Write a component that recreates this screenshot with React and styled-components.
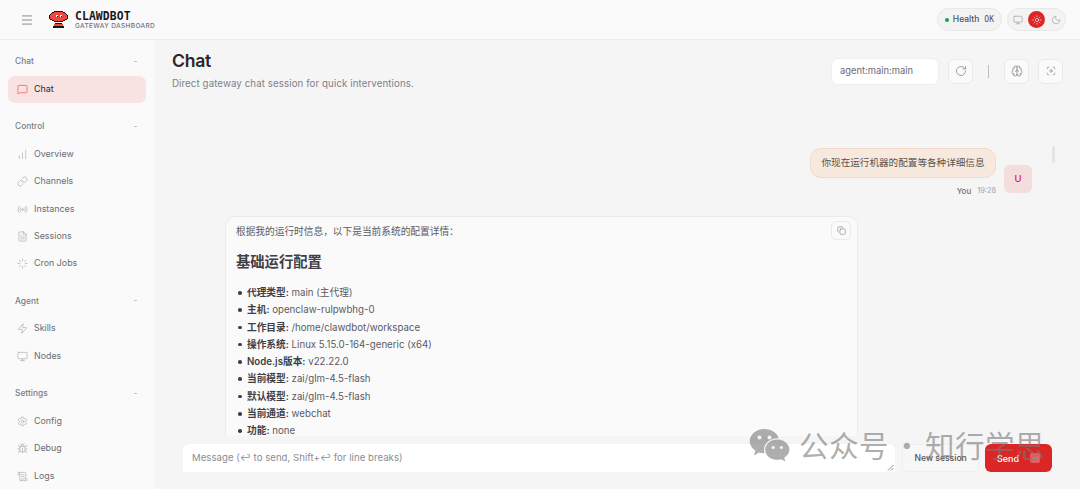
import React from "react";
import styled, { createGlobalStyle } from "styled-components";
import {
  Menu, MessageSquare, ChartNoAxesColumnIncreasing, Link, Radio, FileText, Loader, Zap, Monitor,
  Settings, Bug, ScrollText, Sun, Moon, RotateCw, Brain, Focus, Copy, CornerDownLeft,
} from "lucide-react";

const Global = createGlobalStyle`
  html, body { margin: 0; height: 100%; overflow: hidden; }
  #root { height: 100%; }
  * { box-sizing: border-box; }
  body { font-family: "Inter", "Noto Sans CJK SC", sans-serif; color: #3f3f46; background: #f5f5f5; }
`;
const Shell = styled.div`
  position: relative; width: 1080px; height: 489px; overflow: hidden;
  display: grid; grid-template-columns: 155px 1fr; grid-template-rows: 40px 1fr; background: #f5f5f5;
`;
const Topbar = styled.header`
  grid-column: 1 / 3; display: flex; align-items: center; justify-content: space-between;
  padding: 0 14px 0 20px; background: #fafafa; border-bottom: 1px solid #ececec;
`;
const Left = styled.div`display: flex; align-items: center; gap: 15px;`;
const Brand = styled.div`display: flex; align-items: center; gap: 7px;`;
const BrandText = styled.div`display: flex; flex-direction: column;`;
const BrandName = styled.span`font: 700 11.4px/12px "DejaVu Sans Mono", monospace; letter-spacing: 0.1px; color: #18181b;`;
const BrandSub = styled.span`font: 500 6.5px/8px "Inter", sans-serif; letter-spacing: 0.36px; color: #71717a;`;
const Right = styled.div`display: flex; align-items: center; gap: 5px;`;
const Pill = styled.div`
  height: 23px; border: 1px solid #e8e8e8; border-radius: 12px; background: #f3f3f3;
  display: flex; align-items: center; padding: ${p => p.$pad || "0 7px"}; gap: ${p => p.$gap || "4px"};
`;
const Dot = styled.span`width: 4px; height: 4px; border-radius: 50%; background: #16a34a;`;
const HealthLabel = styled.span`font: 500 8.5px/1 "Inter", sans-serif; color: #52525b;`;
const HealthValue = styled.span`font: 500 8px/1 "DejaVu Sans Mono", monospace; color: #52525b; margin-left: 1px;`;
const ThemeBtn = styled.span`
  width: 17px; height: 17px; border-radius: 50%; display: flex; align-items: center; justify-content: center;
  background: ${p => p.$active ? "#dc2626" : "transparent"}; color: ${p => p.$active ? "#fff" : "#9a9aa2"};
`;
const Sidebar = styled.aside`background: #fafafa; padding: 14px 9px 0 8px; display: flex; flex-direction: column; gap: 16.5px; overflow: hidden;`;
const Group = styled.section`display: flex; flex-direction: column;`;
const GroupHead = styled.div`
  height: 14px; margin-bottom: 7.5px; padding: 0 7px; display: flex; align-items: center; justify-content: space-between;
  font: 500 8.4px/14px "Inter", sans-serif; color: #7c7c85;
  &::after { content: ""; width: 3px; height: 1px; background: #c4c4c8; margin-right: 2px; }
`;
const Item = styled.div`
  height: 27.3px; padding: 0 9px; border-radius: 7px; display: flex; align-items: center; gap: 6px;
  font: 400 8.9px/1 "Inter", sans-serif; color: ${p => p.$active ? "#27272a" : "#6b6b74"};
  background: ${p => p.$active ? "#f8e2e2" : "transparent"};
  svg { color: ${p => p.$active ? "#ef4444" : "#a8a8ae"}; flex: none; }
`;
const Main = styled.main`display: flex; flex-direction: column; min-width: 0; min-height: 0;`;
const PageHead = styled.div`display: flex; justify-content: space-between; padding: 10px 17px 0 17px; height: 56px;`;
const PageTitle = styled.h1`margin: 0; font: 600 17.6px/22px "Inter", sans-serif; letter-spacing: -0.3px; color: #27272a;`;
const PageSub = styled.p`margin: 5px 0 0; font: 400 9.7px/13px "Inter", sans-serif; letter-spacing: 0.1px; color: #80808a;`;
const Controls = styled.div`display: flex; align-items: center; height: 26px; margin-top: 8px;`;
const SessionBox = styled.div`
  width: 108px; height: 27px; padding: 0 8px; background: #fff; border: 1px solid #eee; border-radius: 7px;
  display: flex; align-items: center; font: 400 9.4px/1 "Inter", sans-serif; color: #6b6b74;
`;
const IconBtn = styled.div`
  width: 25px; height: 25px; margin-left: ${p => p.$ml || "0"}; background: #fafafa; border: 1px solid #eaeaea; border-radius: 6px;
  display: flex; align-items: center; justify-content: center; color: #7c7c85;
`;
const VLine = styled.span`width: 1px; height: 13px; background: #bdbdc2; margin: 0 15px;`;
const Thread = styled.div`position: relative; flex: 1; min-height: 0; overflow: hidden; padding: 52px 48px 0 70px; display: flex; flex-direction: column;`;
const UserRow = styled.div`display: flex; justify-content: flex-end; gap: 8px; height: 68px; flex: none;`;
const UserCol = styled.div`display: flex; flex-direction: column; align-items: flex-end;`;
const UserBubble = styled.div`
  height: 30px; width: 186px; background: #f8e9df; border: 1px solid #f5d9c8; border-radius: 11px;
  display: flex; align-items: center; justify-content: center; font: 400 9.6px/1 "Noto Sans CJK SC", sans-serif; color: #57534e;
`;
const Meta = styled.div`display: flex; gap: 6px; align-items: center; margin-top: 7px; height: 12px;`;
const MetaName = styled.span`font: 500 8px/1 "Inter", sans-serif; color: #71717a;`;
const MetaTime = styled.span`font: 400 7.4px/1 "Inter", sans-serif; color: #a1a1aa;`;
const Avatar = styled.div`
  width: 28px; height: 28px; margin-top: 17px; border-radius: 6px; background: #f4dddd; color: #e11d48;
  display: flex; align-items: center; justify-content: center; font: 500 9.5px/1 "Inter", sans-serif;
`;
const Card = styled.article`
  position: relative; width: 633px; flex: none; background: #fafafa; border: 1px solid #ebebeb; border-bottom: 0; border-radius: 10px 10px 0 0;
  padding: 7px 10px 0; font: 400 9.7px/17.3px "Inter", "Noto Sans CJK SC", sans-serif; color: #5b5b63;
`;
const CardIntro = styled.p`margin: 0; line-height: 15px;`;
const CardHeading = styled.h2`margin: 11px 0 13px; font: 600 14.3px/21px "Noto Sans CJK SC", sans-serif; color: #3f3f46;`;
const List = styled.ul`margin: 0; padding: 0 0 0 11px; list-style: none;`;
const Row = styled.li`
  position: relative; height: 17.3px; white-space: nowrap;
  &::before { content: ""; position: absolute; left: -9px; top: 7px; width: 3.5px; height: 3.5px; border-radius: 50%; background: #3f3f46; }
`;
const Key = styled.strong`font-weight: 600; color: #3f3f46;`;
const CopyBtn = styled.div`
  position: absolute; top: 4px; right: 6px; width: 20px; height: 19px; border: 1px solid #ebebeb; border-radius: 5px;
  display: flex; align-items: center; justify-content: center; color: #71717a; background: #fafafa;
`;
const ScrollThumb = styled.div`position: absolute; right: 25px; top: 50px; width: 3px; height: 17px; border-radius: 2px; background: #e4e4e7;`;
const Compose = styled.div`display: flex; align-items: flex-start; height: 53px; padding: 8px 28px 0 28px; gap: 7px;`;
const TextArea = styled.div`
  position: relative; width: 713px; height: 28px; background: #fff; border-radius: 6px 6px 0 0; padding: 0 9px;
  display: flex; align-items: center; font: 400 9.6px/1 "Inter", sans-serif; letter-spacing: 0.04px; color: #8c8c94;
`;
const Grip = styled.svg`position: absolute; right: 1px; bottom: 1px;`;
const Ghost = styled.div`
  width: 77px; height: 28px; background: #f7f7f7; border: 1px solid #eee; border-radius: 6px;
  display: flex; align-items: center; justify-content: center; font: 500 8.6px/1 "Inter", sans-serif; color: #52525b;
`;
const Send = styled.div`
  width: 67px; height: 28px; margin-left: -1px; background: #dc2626; border-radius: 6px; color: #fff;
  display: flex; align-items: center; justify-content: center; gap: 11px; font: 500 9px/1 "Inter", sans-serif;
`;
const Kbd = styled.span`width: 10px; height: 10px; border-radius: 2px; background: rgba(255,255,255,.25); display: flex; align-items: center; justify-content: center;`;
const Watermark = styled.div`position: absolute; left: 749px; top: 425px; display: flex; align-items: center; gap: 9px; color: rgba(120,120,120,.6); pointer-events: none;`;
const MarkText = styled.span`font: 400 29.6px/40px "Noto Sans CJK SC", sans-serif; letter-spacing: 0.4px; word-spacing: -4px; white-space: nowrap;`;

const Lobster = () => (
  <svg width="19" height="18" viewBox="0 0 19 18" shapeRendering="crispEdges">
    <path fill="#18181b" d="M5 0h9v1h2v1h1v1h1v1h1v4h-1v1h-2v1h-2v1H5v-1H3V9H1V8H0V4h1V3h1V2h1V1h2z" />
    <path fill="#f0473c" d="M5 1h9v1h2v1h1v1h1v4h-2v1h-2v1H5V9H3V8H1V4h1V3h1V2h2z" />
    <path fill="#fff" d="M7 4h2v2H7zM11 4h2v2h-2z" />
    <path fill="#18181b" d="M8 5h1v1H8zM12 5h1v1h-1zM6 12h7v1H6zM4 15h11v2H4z" />
    <path fill="#f0473c" d="M5 13h9v2H5z" />
  </svg>
);
const Wechat = () => (
  <svg width="41" height="35" viewBox="0 0 41 35" fill="currentColor">
    <path d="M15.5 1C7.3 1 .8 6.4.8 13.2c0 3.9 2.2 7.2 5.6 9.5L5 27.4l5-2.8c1.4.4 3 .6 4.5.6h1.2c-.4-1.2-.6-2.4-.6-3.7 0-6.3 6-11.3 13.4-11.3h1.1C28.3 5 22.4 1 15.5 1z" />
    <path d="M40.4 21.7c0-5.6-5.5-10.1-12.1-10.1S16.2 16.1 16.2 21.7s5.5 10.1 12.1 10.1c1.4 0 2.7-.2 4-.6l4 2.3-1.1-3.8c3.1-2 5.2-4.9 5.2-8z" />
    <circle cx="10.5" cy="9.5" r="2" fill="#f5f5f5" /><circle cx="20.5" cy="9.5" r="2" fill="#f5f5f5" />
    <circle cx="24.2" cy="19.5" r="1.6" fill="#f5f5f5" /><circle cx="32.4" cy="19.5" r="1.6" fill="#f5f5f5" />
  </svg>
);

const groups = [
  { name: "Chat", items: [{ label: "Chat", Icon: MessageSquare, active: true }] },
  { name: "Control", items: [
    { label: "Overview", Icon: ChartNoAxesColumnIncreasing }, { label: "Channels", Icon: Link },
    { label: "Instances", Icon: Radio }, { label: "Sessions", Icon: FileText }, { label: "Cron Jobs", Icon: Loader },
  ] },
  { name: "Agent", items: [{ label: "Skills", Icon: Zap }, { label: "Nodes", Icon: Monitor }] },
  { name: "Settings", items: [{ label: "Config", Icon: Settings }, { label: "Debug", Icon: Bug }, { label: "Logs", Icon: ScrollText }] },
];
const rows = [
  ["代理类型", "main (主代理)"], ["主机", "openclaw-rulpwbhg-0"], ["工作目录", "/home/clawdbot/workspace"],
  ["操作系统", "Linux 5.15.0-164-generic (x64)"], ["Node.js版本", "v22.22.0"], ["当前模型", "zai/glm-4.5-flash"],
  ["默认模型", "zai/glm-4.5-flash"], ["当前通道", "webchat"], ["功能", "none"],
];

export default function App() {
  return (
    <Shell>
      <Global />
      <Topbar>
        <Left>
          <Menu size={14} color="#7c7c85" strokeWidth={1.5} />
          <Brand>
            <Lobster />
            <BrandText>
              <BrandName>CLAWDBOT</BrandName>
              <BrandSub>GATEWAY DASHBOARD</BrandSub>
            </BrandText>
          </Brand>
        </Left>
        <Right>
          <Pill><Dot /><HealthLabel>Health</HealthLabel><HealthValue>OK</HealthValue></Pill>
          <Pill $pad="0 1px" $gap="2px">
            <ThemeBtn><Monitor size={10} strokeWidth={1.5} /></ThemeBtn>
            <ThemeBtn $active><Sun size={10} strokeWidth={1.5} /></ThemeBtn>
            <ThemeBtn><Moon size={10} strokeWidth={1.5} /></ThemeBtn>
          </Pill>
        </Right>
      </Topbar>
      <Sidebar>
        {groups.map(g => (
          <Group key={g.name}>
            <GroupHead>{g.name}</GroupHead>
            {g.items.map(({ label, Icon, active }) => (
              <Item key={label} $active={active}><Icon size={11} strokeWidth={1.4} />{label}</Item>
            ))}
          </Group>
        ))}
      </Sidebar>
      <Main>
        <PageHead>
          <div>
            <PageTitle>Chat</PageTitle>
            <PageSub>Direct gateway chat session for quick interventions.</PageSub>
          </div>
          <Controls>
            <SessionBox>agent:main:main</SessionBox>
            <IconBtn $ml="9px"><RotateCw size={12} strokeWidth={1.4} /></IconBtn>
            <VLine />
            <IconBtn><Brain size={12} strokeWidth={1.4} /></IconBtn>
            <IconBtn $ml="9px"><Focus size={10} strokeWidth={1.4} /></IconBtn>
          </Controls>
        </PageHead>
        <Thread>
          <ScrollThumb />
          <UserRow>
            <UserCol>
              <UserBubble>你现在运行机器的配置等各种详细信息</UserBubble>
              <Meta><MetaName>You</MetaName><MetaTime>19:28</MetaTime></Meta>
            </UserCol>
            <Avatar>U</Avatar>
          </UserRow>
          <Card>
            <CopyBtn><Copy size={9} strokeWidth={1.4} /></CopyBtn>
            <CardIntro>根据我的运行时信息，以下是当前系统的配置详情：</CardIntro>
            <CardHeading>基础运行配置</CardHeading>
            <List>
              {rows.map(([k, v]) => <Row key={k}><Key>{k}:</Key> {v}</Row>)}
            </List>
          </Card>
        </Thread>
        <Compose>
          <TextArea>
            Message (↩ to send, Shift+↩ for line breaks)
            <Grip width="7" height="7" viewBox="0 0 7 7"><path d="M6.5 1 1 6.5M6.5 4 4 6.5" stroke="#777" strokeWidth=".8" /></Grip>
          </TextArea>
          <Ghost>New session</Ghost>
          <Send>Send<Kbd><CornerDownLeft size={6} strokeWidth={1.5} /></Kbd></Send>
        </Compose>
      </Main>
      <Watermark>
        <Wechat />
        <MarkText>公众号 · 知行学思</MarkText>
      </Watermark>
    </Shell>
  );
}
